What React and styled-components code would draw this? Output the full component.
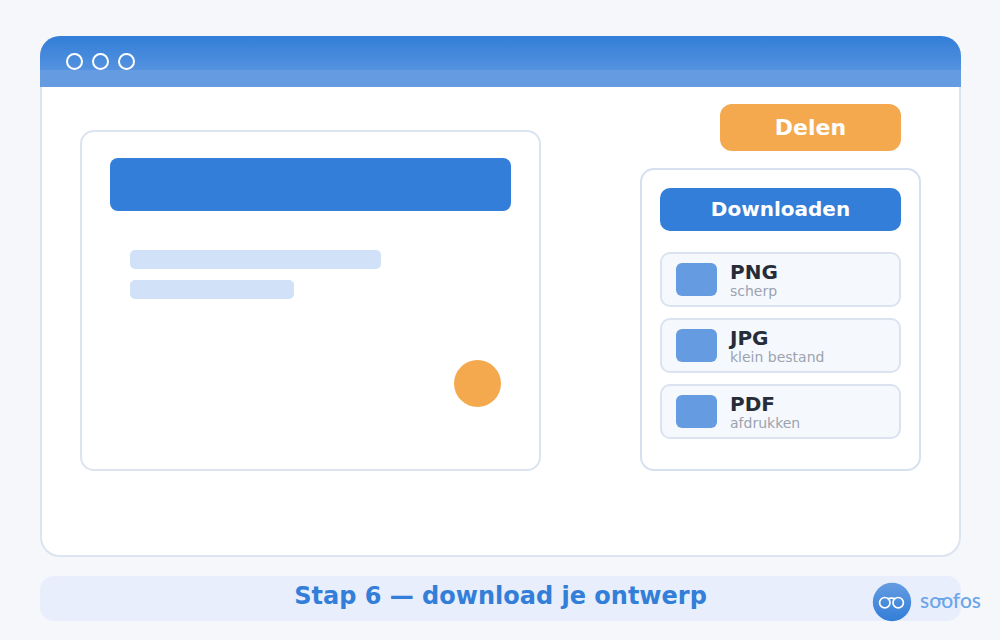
import React from 'react';
import styled, { createGlobalStyle } from 'styled-components';

const options = [
    { id: 'png', title: 'PNG', note: 'scherp' },
    { id: 'jpg', title: 'JPG', note: 'klein bestand' },
    { id: 'pdf', title: 'PDF', note: 'afdrukken' },
]

const Logo = () => (
    <LogoStyle href="#" aria-label="soofos">
        <svg width="40" height="40" viewBox="0 0 40 40" aria-hidden="true">
            <defs>
                <linearGradient id="badge" x1="0" y1="0" x2="0" y2="1">
                    <stop offset="0" stopColor="#659ce1" />
                    <stop offset="1" stopColor="#327ed8" />
                </linearGradient>
            </defs>
            <circle cx="20" cy="20" r="19.2" fill="url(#badge)" />
            <g fill="none" stroke="#fff" strokeWidth="1.7">
                <circle cx="12.8" cy="20.7" r="5.2" />
                <circle cx="26.2" cy="20.7" r="5.2" />
                <path d="M15.5 16.8q4-1.4 8 0" />
            </g>
        </svg>
        <Wordmark>soofos</Wordmark>
    </LogoStyle>
)

const App = () => {
    return (
        <>
            <GlobalStyle />
            <Page>
                <Window>
                    <TitleBar>
                        <Dot />
                        <Dot />
                        <Dot />
                    </TitleBar>
                    <Content>
                        <Canvas>
                            <Banner />
                            <Lines>
                                <Line $width={66} />
                                <Line $width={43} />
                            </Lines>
                            <Accent />
                        </Canvas>
                        <Sidebar>
                            <ShareButton type="button">Delen</ShareButton>
                            <Panel>
                                <DownloadButton type="button">Downloaden</DownloadButton>
                                <OptionList>
                                    {options.map((option) => (
                                        <Option type="button" key={option.id}>
                                            <Thumb />
                                            <OptionText>
                                                <strong>{option.title}</strong>
                                                <small>{option.note}</small>
                                            </OptionText>
                                        </Option>
                                    ))}
                                </OptionList>
                            </Panel>
                        </Sidebar>
                    </Content>
                </Window>
                <Caption>
                    <h1>Stap 6 — download je ontwerp</h1>
                </Caption>
                <Logo />
            </Page>
        </>
    );
}

const GlobalStyle = createGlobalStyle`
    * {
        box-sizing: border-box;
    }

    body {
        margin: 0;
        background: #f5f7fb;
        font-family: "DejaVu Sans", sans-serif;
    }

    button {
        font-family: inherit;
        cursor: pointer;
    }
`

const Page = styled.main`
    position: relative;
    display: flex;
    flex-direction: column;
    gap: 19px;
    min-height: 100vh;
    padding: 36px 39px 19px 40px;
`

const Window = styled.section`
    flex: 1;
    display: flex;
    flex-direction: column;
    background: #fff;
    border: 2px solid #dce4f0;
    border-radius: 20px;
`

const TitleBar = styled.header`
    display: flex;
    gap: 9px;
    height: 51px;
    margin: -2px -2px 0;
    padding: 17px 26px;
    border-radius: 20px 20px 0 0;
    background: linear-gradient(#327ed8 0, #5492df 34px, #659ce1 34px);
`

const Dot = styled.span`
    width: 17px;
    height: 17px;
    border: 2px solid #fff;
    border-radius: 50%;
`

const Content = styled.div`
    flex: 1;
    display: flex;
    justify-content: space-between;
    align-items: flex-end;
    gap: 99px;
    padding: 17px 38px 84px;
`

const Canvas = styled.div`
    flex: 1;
    display: flex;
    flex-direction: column;
    height: 341px;
    padding: 26px 28px 62px;
    border: 2px solid #dce4f0;
    border-radius: 14px;
`

const Banner = styled.div`
    height: 53px;
    border-radius: 8px;
    background: #327ed8;
`

const Lines = styled.div`
    display: flex;
    flex-direction: column;
    gap: 11px;
    flex: 1;
    padding: 39px 0 0 20px;
`

const Line = styled.div`
    width: ${(props) => props.$width}%;
    height: 19px;
    border-radius: 5px;
    background: #d1e2f8;
`

const Accent = styled.div`
    align-self: flex-end;
    width: 47px;
    height: 47px;
    margin-right: 10px;
    border-radius: 50%;
    background: #f4a94f;
`

const Sidebar = styled.aside`
    display: flex;
    flex-direction: column;
    gap: 17px;
    width: 281px;
`

const SolidButton = styled.button`
    padding: 0;
    border: 0;
    color: #fff;
    font-weight: bold;
`

const ShareButton = styled(SolidButton)`
    align-self: flex-end;
    width: 181px;
    height: 47px;
    margin-right: 20px;
    border-radius: 12px;
    background: #f4a94f;
    font-size: 22px;
`

const Panel = styled.div`
    display: flex;
    flex-direction: column;
    gap: 21px;
    padding: 18px 18px 30px;
    border: 2px solid #d6e0ef;
    border-radius: 14px;
`

const DownloadButton = styled(SolidButton)`
    height: 43px;
    padding-bottom: 2px;
    border-radius: 10px;
    background: #327ed8;
    font-size: 20px;
`

const OptionList = styled.div`
    display: flex;
    flex-direction: column;
    gap: 11px;
`

const Option = styled.button`
    display: flex;
    align-items: center;
    gap: 13px;
    height: 55px;
    padding: 0 14px;
    border: 2px solid #dae3ef;
    border-radius: 10px;
    background: #f5f8fd;
    text-align: left;
`

const Thumb = styled.span`
    width: 41px;
    height: 33px;
    border-radius: 6px;
    background: #659ce1;
`

const OptionText = styled.span`
    display: flex;
    flex-direction: column;

    strong {
        color: #262c38;
        font-size: 20px;
        line-height: 22px;
    }

    small {
        color: #9ca3af;
        font-size: 14px;
        line-height: 16px;
    }
`

const Caption = styled.footer`
    height: 45px;
    padding-bottom: 5px;
    border-radius: 14px;
    background: #e8eefb;
    text-align: center;

    h1 {
        margin: 0;
        color: #327ed8;
        font-size: 24px;
        line-height: 40px;
    }
`

// brand mark floats over the corner of the caption
const LogoStyle = styled.a`
    position: absolute;
    right: 19px;
    bottom: 18px;
    display: flex;
    gap: 8px;
    color: #6ba5e9;
    text-decoration: none;
`

const Wordmark = styled.span`
    position: relative;
    font-family: Lato, sans-serif;
    font-size: 21px;
    font-weight: 500;
    line-height: 36px;

    /* bridge between the two o's */
    &::after {
        content: "";
        position: absolute;
        top: 16px;
        left: 18px;
        width: 6px;
        height: 2px;
        background: currentColor;
    }
`

export default App;
